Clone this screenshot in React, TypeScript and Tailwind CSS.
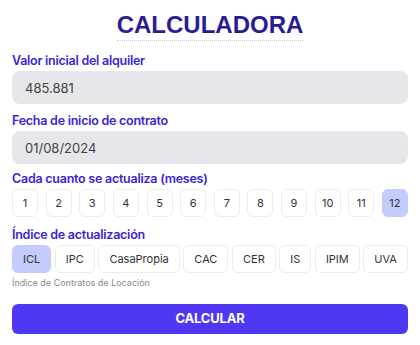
import React, { useState } from "react";

const MONTHS = [1, 2, 3, 4, 5, 6, 7, 8, 9, 10, 11, 12];
const INDICES = ["ICL", "IPC", "CasaPropia", "CAC", "CER", "IS", "IPIM", "UVA"];

const Calculadora = () => {
  const [monto, setMonto] = useState("485.881");
  const [fecha, setFecha] = useState("01/08/2024");
  const [meses, setMeses] = useState(12);
  const [indice, setIndice] = useState("ICL");

  return (
    <div
      className="w-[420px] h-[345px] bg-white px-3"
      style={{ fontFamily: "Inter, 'Noto Sans', sans-serif" }}
    >
      <div className="flex justify-center pt-[11px]">
        <h1
          className="text-[24px] leading-[28px] font-bold text-[#2a1c94] border-b border-dotted border-[#cfd0d6] pb-[1px]"
          style={{ fontFamily: "'Liberation Sans', Arial, sans-serif" }}
        >
          CALCULADORA
        </h1>
      </div>

      <label className="block mt-[10px] text-[12.5px] leading-[20px] font-semibold tracking-[-0.25px] text-[#3a24d4]">
        Valor inicial del alquiler
      </label>
      <input
        value={monto}
        onChange={(e) => setMonto(e.target.value)}
        className="w-full h-[33px] rounded-lg bg-[#e6e7ea] px-[13px] text-[13px] text-[#444] outline-none"
      />

      <label className="block mt-[7px] text-[12.5px] leading-[20px] font-semibold tracking-[-0.25px] text-[#3a24d4]">
        Fecha de inicio de contrato
      </label>
      <input
        value={fecha}
        onChange={(e) => setFecha(e.target.value)}
        className="w-full h-[33px] rounded-lg bg-[#e6e7ea] px-[13px] text-[13px] text-[#444] outline-none"
      />

      <label className="block mt-[5px] text-[12.5px] leading-[20px] font-semibold tracking-[-0.25px] text-[#3a24d4]">
        Cada cuanto se actualiza (meses)
      </label>
      <div className="flex justify-between">
        {MONTHS.map((m) => (
          <button
            key={m}
            onClick={() => setMeses(m)}
            className={
              m === meses
                ? "w-[26px] h-[28px] rounded-md bg-[#c4ccfb] border border-[#c4ccfb] text-[11px] text-[#333]"
                : "w-[26px] h-[28px] rounded-md bg-white border border-[#ececef] text-[11px] text-[#333]"
            }
          >
            {m}
          </button>
        ))}
      </div>

      <label className="block mt-[8px] text-[12.5px] leading-[20px] font-semibold tracking-[-0.25px] text-[#3a24d4]">
        Índice de actualización
      </label>
      <div className="flex justify-between">
        {INDICES.map((i) => (
          <button
            key={i}
            onClick={() => setIndice(i)}
            className={
              i === indice
                ? "h-[28px] px-[10px] rounded-md bg-[#c4ccfb] border border-[#c4ccfb] text-[11px] text-[#333]"
                : "h-[28px] px-[10px] rounded-md bg-white border border-[#ececef] text-[11px] text-[#333]"
            }
          >
            {i}
          </button>
        ))}
      </div>
      <p className="mt-[3px] text-[9px] leading-[14px] text-[#8a8a8a]">
        Índice de Contratos de Locación
      </p>

      <button className="mt-[14px] w-full h-[30px] rounded-md bg-[#4f38f2] text-white text-[13px] font-bold tracking-[-0.2px]">
        CALCULAR
      </button>
    </div>
  );
};

export default function App() {
  return <Calculadora />;
}
